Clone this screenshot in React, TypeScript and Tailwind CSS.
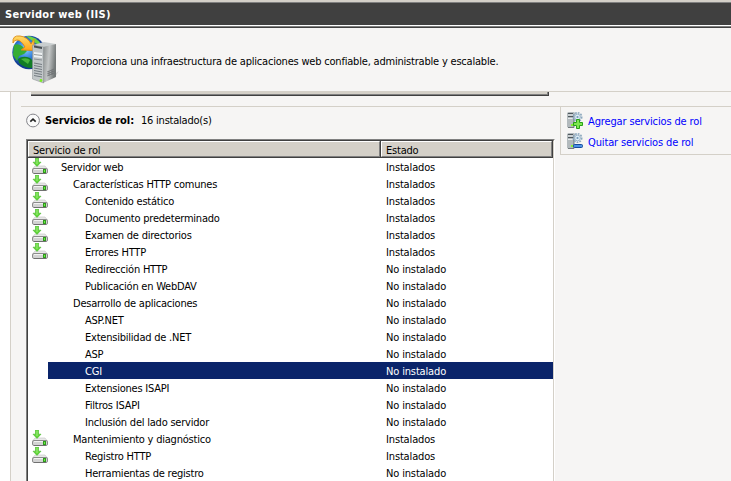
type Row = { name: string; level: 0 | 1 | 2; on?: boolean; selected?: boolean };

const rows: Row[] = [
  { name: "Servidor web", level: 0, on: true },
  { name: "Características HTTP comunes", level: 1, on: true },
  { name: "Contenido estático", level: 2, on: true },
  { name: "Documento predeterminado", level: 2, on: true },
  { name: "Examen de directorios", level: 2, on: true },
  { name: "Errores HTTP", level: 2, on: true },
  { name: "Redirección HTTP", level: 2 },
  { name: "Publicación en WebDAV", level: 2 },
  { name: "Desarrollo de aplicaciones", level: 1 },
  { name: "ASP.NET", level: 2 },
  { name: "Extensibilidad de .NET", level: 2 },
  { name: "ASP", level: 2 },
  { name: "CGI", level: 2, selected: true },
  { name: "Extensiones ISAPI", level: 2 },
  { name: "Filtros ISAPI", level: 2 },
  { name: "Inclusión del lado servidor", level: 2 },
  { name: "Mantenimiento y diagnóstico", level: 1, on: true },
  { name: "Registro HTTP", level: 2, on: true },
  { name: "Herramientas de registro", level: 2 },
];

const indent = { 0: "pl-[13px]", 1: "pl-[25px]", 2: "pl-[37px]" };

function InstalledIcon() {
  return (
    <svg width="16" height="17" viewBox="0 0 16 17" className="block">
      <path d="M3 8h10l2.5 3H.5z" fill="#e9e9e9" stroke="#c4c4c4" strokeWidth=".6" />
      <rect x=".5" y="10.5" width="15" height="5" rx="1.5" fill="#d3d3d3" stroke="#8c8c8c" />
      <path d="M2 11.5h12" stroke="#f3f3f3" />
      <path d="M2 15.5h12" stroke="#707070" />
      <rect x="11" y="11" width="3" height="4" fill="#2f9a1c" />
      <rect x="12" y="12" width="1" height="2" fill="#6cec45" />
      <path d="M3.5 0h3v4.2H9L5 8.4 1 4.2h2.5z" fill="#62d63a" stroke="#43b626" strokeWidth=".6" />
      <path d="M5 .5v5.500" stroke="#a0f07c" />
    </svg>
  );
}

function RoleIcon({ add }: { add?: boolean }) {
  return (
    <svg width="17" height="17" viewBox="0 0 17 17" className="block">
      <path d="M0 1 1.500 0H7l1 1v14.500H1L0 15z" fill="#b3babd" />
      <path d="M1 1.500h5M1 4.500h5" stroke="#4f585d" />
      <path d="M1 3h5M1 6.500h5" stroke="#e5e9eb" />
      <path d="M6.500 2v13" stroke="#8d979b" />
      <path d="M1 15.500h6" stroke="#737b7e" />
      <rect x="4" y="12" width="2" height="2" fill="#86ee32" />
      <circle cx="10.500" cy="5" r="4.200" fill="none" stroke="#8ba7bd" strokeWidth="1.600" strokeDasharray="1.700 1.100" />
      <circle cx="10.500" cy="5" r="2.900" fill="#dcecf6" stroke="#9ab4c8" />
      <circle cx="10.500" cy="5" r="1.100" fill="#7598b6" />
      {add ? (
        <path d="M9.500 7.500h3v3h3v3h-3v3h-3v-3h-3v-3h3z" fill="#7fe650" stroke="#26a117" strokeLinejoin="round" />
      ) : (
        <rect x="6.500" y="11.500" width="9" height="3" rx="1" fill="#4d92e3" stroke="#164b9c" />
      )}
    </svg>
  );
}

function ServerGlobe() {
  return (
    <svg width="48" height="50" viewBox="0 0 48 50" className="block">
      <defs>
        <radialGradient id="sea" cx=".4" cy=".4">
          <stop offset="0" stopColor="#8bd0ff" />
          <stop offset=".55" stopColor="#317fdb" />
          <stop offset="1" stopColor="#123b91" />
        </radialGradient>
        <linearGradient id="side" x2="1" y2=".25">
          <stop offset="0" stopColor="#858989" />
          <stop offset=".5" stopColor="#c3c6c6" />
          <stop offset="1" stopColor="#737878" />
        </linearGradient>
        <linearGradient id="arrow" x2="0" y2="1">
          <stop offset="0" stopColor="#ffdc69" />
          <stop offset="1" stopColor="#ffa318" />
        </linearGradient>
      </defs>
      <path d="M44 38l3-2-4 6-13 5z" fill="#d9d9d8" />
      <circle cx="17" cy="17.500" r="16.700" fill="url(#sea)" />
      <path d="M2 10q4-2 8 1l5 5-3 3-5 2-2 5-4-6z" fill="#35ad35" />
      <path d="M6 24q5-4 12-1l4 4-2 6q-8 0-13-5z" fill="#127c26" />
      <path d="M14 1q10 0 16 9l-5-1-6-4z" fill="#6cd442" />
      <path d="M9 24q6-2 9 1l-2 4z" fill="#47b53c" />
      <path d="M1 8Q0 0 8 1q8 1 11 8l3-5v11.500l-13-.5 4-3Q9 5 5 5 2 5 1 8z" fill="url(#arrow)" stroke="#dc8a10" strokeWidth=".9" />
      <path d="M21 10 32 7l12 2-12 4z" fill="#c9cecf" />
      <path d="M31 12 44 9v33l-13 6z" fill="url(#side)" />
      <path d="m20.500 10 11 2v36l-11-4z" fill="#c2c7c9" stroke="#858b8d" strokeWidth=".5" />
      <path d="m22 10.500 8 1.500v2l-8-1.500z" fill="#474e52" />
      <path d="m22 17 8 1v5l-8-1z" fill="#eef1f2" />
      <path d="m22 19.500 8 1m-8 3.500 8 1" stroke="#7c8387" strokeWidth=".8" />
      <path d="m22 28 8 1.500m-8 1 8 1.500m-8 1 8 1.500m-8 1 8 1.500m-8 1 8 1.500m-8 1 8 1.500" stroke="#747b81" />
      <path d="m35 37 7-3m-7 5 7-3m-7 5 7-3m-5-2v5m3-6v5" stroke="#676c6e" strokeWidth=".7" />
      <circle cx="29" cy="45.500" r="1.400" fill="#78ee1e" />
    </svg>
  );
}

export default function App() {
  return (
    <div className="flex h-[481px] w-[731px] flex-col overflow-hidden bg-[#f6f5f4] font-['DejaVu_Sans_Condensed','DejaVu_Sans',sans-serif] text-[11px] leading-[17px] tracking-[-0.22px] whitespace-nowrap text-black [font-stretch:condensed]">
      <div className="h-[3px] shrink-0 border-b border-[#808080] bg-[#d4d0c8]" />
      <div className="flex h-[22px] shrink-0 items-center bg-[#404040] pl-[5px] text-[11px] tracking-[0.28px] font-bold text-white">Servidor web (IIS)</div>
      <div className="h-[3px] shrink-0 border-t border-b border-t-white border-b-[#404040] bg-[#808080]" />
      <div className="flex h-16 shrink-0 items-start border-b border-[#d4d0c8]">
        <div className="w-[71px] pt-[7px] pl-[12px]"><ServerGlobe /></div>
        <div className="pt-[25px] tracking-[-0.2px]">Proporciona una infraestructura de aplicaciones web confiable, administrable y escalable.</div>
      </div>
      <div className="flex min-h-0 flex-1">
        <div className="w-[11px] shrink-0 border-r border-[#d4d0c8] bg-white" />
        <div className="flex min-w-0 flex-1 flex-col">
          <div className="ml-5 h-1 w-[518px] shrink-0 border-r border-b border-[#404040] bg-[#d4d0c8]">
            <div className="h-[3px] border-r border-b border-[#808080]" />
          </div>
          <div className="mt-[10px] ml-[10px] flex min-h-0 flex-1 border-t border-[#d4d0c8]">
            <div className="flex w-[539px] shrink-0 flex-col">
              <div className="flex h-8 shrink-0 items-start pt-[5px] pl-[5px]">
                <svg width="14" height="15" viewBox="0 0 14 15" className="mt-px block">
                  <circle cx="7" cy="7.5" r="6.4" fill="#fafafa" stroke="#85858b" />
                  <path d="m4.3 8.7 2.7-2.6 2.7 2.6" fill="none" stroke="#222" strokeWidth="1.6" />
                </svg>
                <span className="ml-[5px] w-24 font-bold tracking-[-0.07px]">Servicios de rol:</span>
                <span>16 instalado(s)</span>
              </div>
              <div className="ml-[5px] flex min-h-0 w-[529px] flex-1 flex-col border-t border-r border-l border-t-[#808080] border-r-white border-l-[#808080]">
                <div className="flex min-h-0 flex-1 flex-col border-t border-r border-l border-t-[#404040] border-r-[#d4d0c8] border-l-[#404040] bg-white">
                  <div className="flex h-[17px] shrink-0 bg-[#d4d0c8]">
                    <div className="w-[353px] border-r border-b border-[#404040]">
                      <div className="h-4 border border-t-white border-r-[#808080] border-b-[#808080] border-l-white pl-[4px] leading-[17px]">Servicio de rol</div>
                    </div>
                    <div className="flex-1 border-r border-b border-[#404040]">
                      <div className="h-4 border border-t-white border-r-[#808080] border-b-[#808080] border-l-white pl-[4px] leading-[17px]">Estado</div>
                    </div>
                  </div>
                  {rows.map((r) => (
                    <div key={r.name} className="flex h-[17px] shrink-0">
                      <div className="w-5 shrink-0 pl-1">{r.on && <InstalledIcon />}</div>
                      <div className={`flex flex-1 leading-[19px] ${r.selected ? "bg-[#0a246a] text-white" : ""}`}>
                        <div className={`w-[338px] ${indent[r.level]}`}>{r.name}</div>
                        <div className="tracking-[-0.15px]">{r.on ? "Instalados" : "No instalado"}</div>
                      </div>
                    </div>
                  ))}
                </div>
              </div>
            </div>
            <div className="flex h-[48px] flex-1 flex-col gap-1 border-b border-l border-[#d4d0c8] pt-[5px] pl-[6px] text-[#0000ff] tracking-[-0.14px]">
              <div className="flex h-[17px] gap-1"><RoleIcon add /><span className="leading-[19px]">Agregar servicios de rol</span></div>
              <div className="flex h-[17px] gap-1"><RoleIcon /><span className="leading-[19px]">Quitar servicios de rol</span></div>
            </div>
          </div>
        </div>
      </div>
    </div>
  );
}
